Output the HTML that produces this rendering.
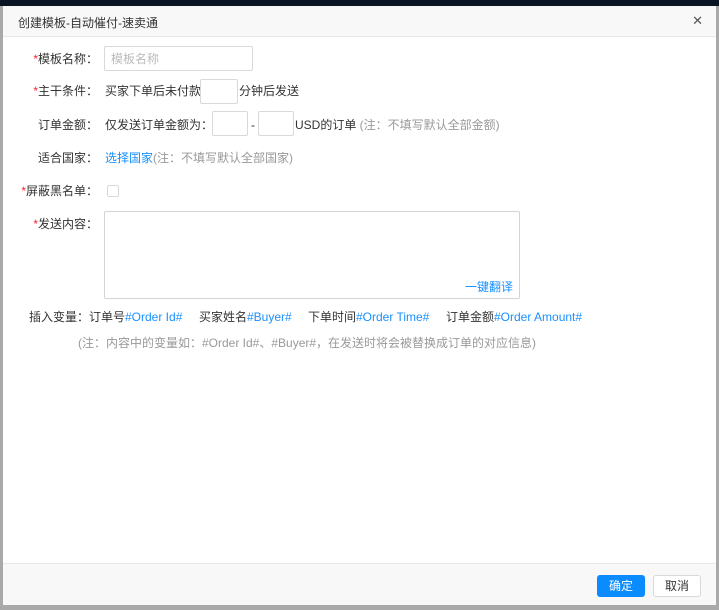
<!DOCTYPE html>
<html><head><meta charset="utf-8"><style>
*{margin:0;padding:0;box-sizing:border-box}
body{width:719px;height:610px;overflow:hidden;background:#a9a9a9;font-family:"Liberation Sans","Noto Sans CJK SC",sans-serif;font-size:12px;color:#333;position:relative}
.top{position:absolute;left:0;top:0;width:719px;height:6px;background:#0b1422}
.dlg{position:absolute;left:3px;top:6px;width:713px;height:599px;background:#fff}
.hd{position:absolute;left:0;top:0;width:713px;height:31px;background:#f8f8f8;border-bottom:1px solid #e8e8e8}
.hd .t{position:absolute;left:15px;top:8px;font-size:12px;color:#333}
.hd .x{position:absolute;right:13px;top:7px;font-size:13px;color:#555}
.a{position:absolute;white-space:nowrap;line-height:16px}
.lb{position:absolute;left:0;width:95px;text-align:right;white-space:nowrap;line-height:16px}
.r{color:#f5222d}
.in{position:absolute;border:1px solid #d9d9d9;background:#fff;border-radius:2px}
.g{color:#999}
.b{color:#1890ff}
.ft{position:absolute;left:0;top:557px;width:713px;height:42px;background:#f8f8f8;border-top:1px solid #e8e8e8}
.btn{position:absolute;top:11px;width:48px;height:22px;border-radius:3px;text-align:center;line-height:22px;font-size:12px}
</style></head><body>
<div class="top"></div>
<div class="dlg">
<div class="hd"><span class="t">创建模板-自动催付-速卖通</span><span class="x">✕</span></div>
<div class="lb" style="top:45px"><span class="r">*</span>模板名称：</div>
<div class="in" style="left:101px;top:40px;width:149px;height:25px"></div>
<div class="a g" style="left:108px;top:45px;color:#bbb">模板名称</div>
<div class="lb" style="top:77px"><span class="r">*</span>主干条件：</div>
<div class="a" style="left:102px;top:77px">买家下单后未付款</div>
<div class="in" style="left:197px;top:73px;width:38px;height:25px"></div>
<div class="a" style="left:236px;top:77px">分钟后发送</div>
<div class="lb" style="top:111px">订单金额：</div>
<div class="a" style="left:102px;top:111px">仅发送订单金额为：</div>
<div class="in" style="left:209px;top:105px;width:36px;height:25px"></div>
<div class="a" style="left:248px;top:111px">-</div>
<div class="in" style="left:255px;top:105px;width:36px;height:25px"></div>
<div class="a" style="left:292px;top:111px">USD的订单 <span class="g">(注：不填写默认全部金额)</span></div>
<div class="lb" style="top:144px">适合国家：</div>
<div class="a" style="left:102px;top:144px"><span class="b">选择国家</span><span class="g">(注：不填写默认全部国家)</span></div>
<div class="lb" style="top:177px"><span class="r">*</span>屏蔽黑名单：</div>
<div class="in" style="left:104px;top:179px;width:12px;height:12px"></div>
<div class="lb" style="top:210px"><span class="r">*</span>发送内容：</div>
<div class="in" style="left:101px;top:205px;width:416px;height:88px;border-color:#d4d4d4"></div>
<div class="a b" style="left:462px;top:273px">一键翻译</div>
<div class="a" style="left:26px;top:303px">插入变量：订单号</div>
<div class="a b" style="left:122px;top:303px">#Order Id#</div>
<div class="a" style="left:196px;top:303px">买家姓名</div>
<div class="a b" style="left:244px;top:303px">#Buyer#</div>
<div class="a" style="left:305px;top:303px">下单时间</div>
<div class="a b" style="left:353px;top:303px">#Order Time#</div>
<div class="a" style="left:443px;top:303px">订单金额</div>
<div class="a b" style="left:491px;top:303px">#Order Amount#</div>
<div class="a g" style="left:75px;top:329px">(注：内容中的变量如：#Order Id#、#Buyer#，在发送时将会被替换成订单的对应信息)</div>
<div class="ft">
<div class="btn" style="left:594px;background:#0a8cff;color:#fff">确定</div>
<div class="btn" style="left:650px;background:#fff;border:1px solid #d9d9d9;color:#333;line-height:20px">取消</div>
</div>
</div>
</body></html>
